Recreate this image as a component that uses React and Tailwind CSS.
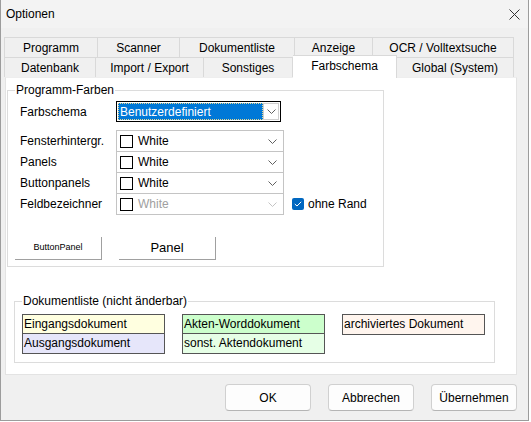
import React from "react";

const row1 = [
  { label: "Programm", w: "w-[94px]" },
  { label: "Scanner", w: "w-[82px]" },
  { label: "Dokumentliste", w: "w-[115px]" },
  { label: "Anzeige", w: "w-[78px]" },
  { label: "OCR / Volltextsuche", w: "w-[141px]" },
];

const row2 = [
  { label: "Datenbank", w: "w-[92px]" },
  { label: "Import / Export", w: "w-[108px]" },
  { label: "Sonstiges", w: "w-[89px]" },
  { label: "Farbschema", w: "w-[104px]", active: true },
  { label: "Global (System)", w: "w-[117px]" },
];

const colorRows = [
  { label: "Fensterhintergr." },
  { label: "Panels" },
  { label: "Buttonpanels" },
  { label: "Feldbezeichner", disabled: true, last: true },
];

function Chevron({ color = "#606060" }) {
  return (
    <svg width="9" height="5" viewBox="0 0 9 5" className="shrink-0">
      <path d="M0.5 0.5 L4.5 4.5 L8.5 0.5" fill="none" stroke={color} strokeWidth="1" />
    </svg>
  );
}

function TabRow({ tabs }) {
  return (
    <div className="flex h-[20px] items-start">
      {tabs.map((t, i) =>
        t.active ? (
          <div
            key={t.label}
            className={`${t.w} relative z-10 -mt-[2px] h-[23px] bg-white border-t border-r border-[#d9d9d9] flex justify-center pt-[3px] text-[12px] leading-[14px]`}
          >
            {t.label}
          </div>
        ) : (
          <div
            key={t.label}
            className={`${t.w} h-[20px] bg-[#f0f0f0] border-t border-r border-[#d9d9d9] ${i === 0 ? "border-l" : ""} flex items-center justify-center text-[12px]`}
          >
            {t.label}
          </div>
        )
      )}
    </div>
  );
}

export default function App() {
  return (
    <div className="min-h-screen bg-white font-['Liberation_Sans',Arial,sans-serif] text-black">
      <div className="w-[529px] h-[421px] bg-[#f0f0f0] border-x border-b border-[#9c9c9c] flex flex-col">
        {/* Titelleiste */}
        <div className="h-[28px] shrink-0 bg-[#f3f3f3] flex items-center justify-between pl-[5px] pr-[8px]">
          <span className="text-[12px]">Optionen</span>
          <svg width="11" height="11" viewBox="0 0 11 11">
            <path d="M0.5 0.5 L10.5 10.5 M10.5 0.5 L0.5 10.5" stroke="#333" strokeWidth="1" />
          </svg>
        </div>

        {/* Reiter */}
        <div className="pl-[3px] pt-[9px]">
          <TabRow tabs={row1} />
          <TabRow tabs={row2} />

          <div className="ml-[1px] w-[512px] h-[298px] bg-white border border-[#e3e3e3] border-t-[#eeeeee]">
            <fieldset className="ml-[1px] mt-[5px] w-[377px] border border-[#dcdcdc] pl-[7px] pr-[7px] pb-[6px]">
              <legend className="px-[1px] text-[12px] leading-[14px]">Programm-Farben</legend>

              <div className="mt-[4px] flex items-center h-[21px]">
                <div className="w-[101px] pl-[5px] text-[12px]">Farbschema</div>
                <div className="w-[165px] h-[21px] border border-black bg-white flex p-[1px]">
                  <div className="flex-1 bg-[#0078d7] border border-dotted border-[#e8d890] flex items-center pl-[1px] text-[12px] text-white">
                    Benutzerdefiniert
                  </div>
                  <div className="w-[16px] border border-[#cfcfcf] bg-white flex items-center justify-center">
                    <Chevron />
                  </div>
                </div>
              </div>

              <div className="mt-[8px]">
                {colorRows.map((r) => (
                  <div key={r.label} className="flex items-center h-[21px]">
                    <div className="w-[101px] pl-[5px] text-[12px]">{r.label}</div>
                    <div
                      className={`w-[168px] h-[22px] -mb-[1px] bg-white border border-[#c4c4c4] flex items-center pl-[3px] pr-[6px]`}
                    >
                      <div className="w-[13px] h-[13px] border border-black bg-white shrink-0" />
                      <span className={`ml-[5px] flex-1 text-[12px] ${r.disabled ? "text-[#a0a0a0]" : ""}`}>White</span>
                      <Chevron color={r.disabled ? "#c4c4c4" : "#606060"} />
                    </div>
                    {r.disabled && (
                      <label className="ml-[8px] flex items-center">
                        <span className="w-[12px] h-[12px] rounded-[2px] bg-[#0067c0] flex items-center justify-center">
                          <svg width="8" height="6" viewBox="0 0 8 6">
                            <path d="M0.8 3 L3 5 L7.2 0.8" fill="none" stroke="white" strokeWidth="1" />
                          </svg>
                        </span>
                        <span className="ml-[4px] text-[12px]">ohne Rand</span>
                      </label>
                    )}
                  </div>
                ))}
              </div>

              <div className="mt-[23px] flex">
                <div className="w-[87px] h-[23px] border-r border-b border-[#a0a0a0] flex items-center justify-center text-[9px]">
                  ButtonPanel
                </div>
                <div className="ml-[17px] w-[97px] h-[23px] border-r border-b border-[#a0a0a0] flex items-center justify-center text-[13px]">
                  Panel
                </div>
              </div>
            </fieldset>

            <fieldset className="ml-[8px] mt-[27px] w-[481px] border border-[#dcdcdc] pl-[7px] pr-[7px] pb-[8px]">
              <legend className="px-[1px] text-[12px] leading-[14px]">Dokumentliste (nicht änderbar)</legend>
              <div className="mt-[6px] flex items-start gap-[17px] text-[12px]">
                <div className="w-[143px] border border-[#555]">
                  <div className="h-[19px] leading-[19px] pl-[1px] bg-[#ffffe0] border-b border-[#555]">Eingangsdokument</div>
                  <div className="h-[19px] leading-[19px] pl-[1px] bg-[#e6e6fa]">Ausgangsdokument</div>
                </div>
                <div className="w-[143px] border border-[#555]">
                  <div className="h-[19px] leading-[19px] pl-[1px] bg-[#ccffcc] border-b border-[#555]">Akten-Worddokument</div>
                  <div className="h-[19px] leading-[19px] pl-[1px] bg-[#e6ffe6]">sonst. Aktendokument</div>
                </div>
                <div className="w-[143px] border border-[#555]">
                  <div className="h-[19px] leading-[19px] pl-[1px] bg-[#fff5ee]">archiviertes Dokument</div>
                </div>
              </div>
            </fieldset>
          </div>
        </div>

        {/* Schaltflächen */}
        <div className="mt-[9px] flex justify-end gap-[17px] pr-[11px]">
          {["OK", "Abbrechen", "Übernehmen"].map((b) => (
            <button
              key={b}
              className="w-[86px] h-[27px] rounded-[4px] bg-[#fdfdfd] border border-[#d0d0d0] border-b-[#b5b5b5] text-[12px]"
            >
              {b}
            </button>
          ))}
        </div>
      </div>
    </div>
  );
}
